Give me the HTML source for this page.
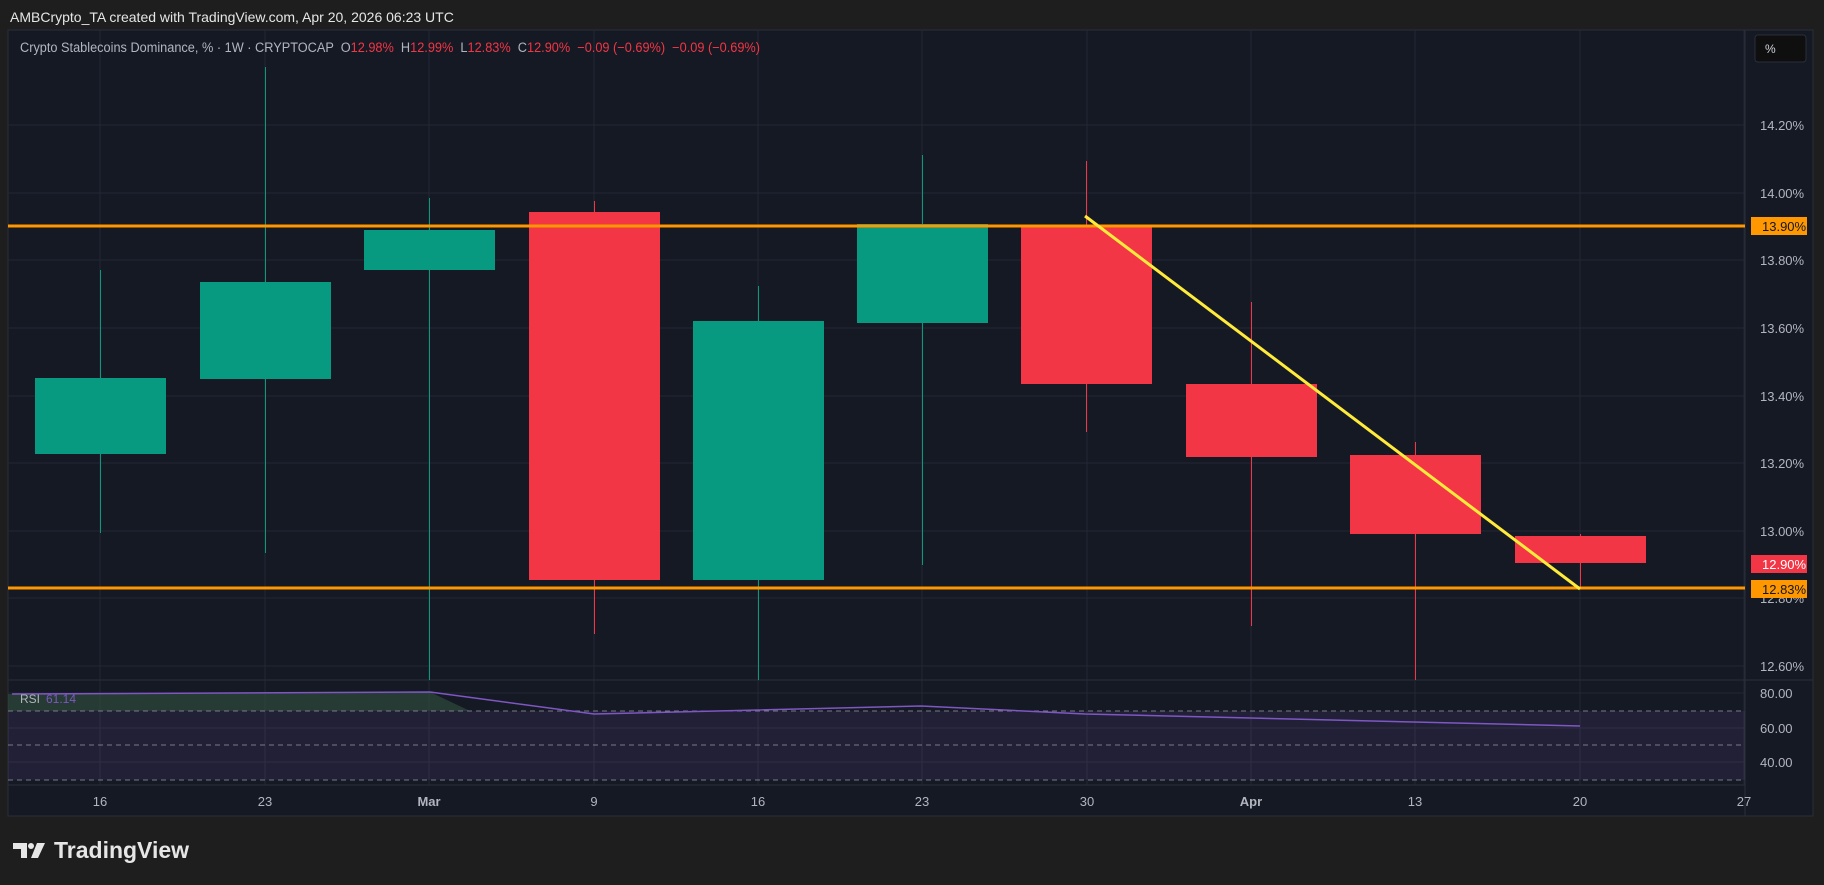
<!DOCTYPE html>
<html><head><meta charset="utf-8"><style>
html,body{margin:0;padding:0;background:#1e1e1e;width:1824px;height:885px;overflow:hidden}
svg{display:block}
text{font-family:"Liberation Sans",sans-serif;white-space:pre}
</style></head><body>
<svg width="1824" height="885" viewBox="0 0 1824 885">
<rect width="1824" height="885" fill="#1e1e1e"/>
<text x="10" y="22" fill="#e6e6e6" font-size="14">AMBCrypto_TA created with TradingView.com, Apr 20, 2026 06:23 UTC</text>
<rect x="8" y="30" width="1805" height="786" fill="#151924" stroke="#2a2e39"/>
<g stroke="#242833" stroke-width="1">
<line x1="8" y1="125" x2="1745" y2="125"/><line x1="8" y1="193" x2="1745" y2="193"/><line x1="8" y1="260" x2="1745" y2="260"/><line x1="8" y1="328" x2="1745" y2="328"/><line x1="8" y1="396" x2="1745" y2="396"/><line x1="8" y1="463" x2="1745" y2="463"/><line x1="8" y1="531" x2="1745" y2="531"/><line x1="8" y1="598" x2="1745" y2="598"/><line x1="8" y1="666" x2="1745" y2="666"/>
<line x1="8" y1="693" x2="1745" y2="693"/><line x1="8" y1="728" x2="1745" y2="728"/><line x1="8" y1="762" x2="1745" y2="762"/>
<line x1="100" y1="30" x2="100" y2="785"/><line x1="265" y1="30" x2="265" y2="785"/><line x1="429" y1="30" x2="429" y2="785"/><line x1="594" y1="30" x2="594" y2="785"/><line x1="758" y1="30" x2="758" y2="785"/><line x1="922" y1="30" x2="922" y2="785"/><line x1="1087" y1="30" x2="1087" y2="785"/><line x1="1251" y1="30" x2="1251" y2="785"/><line x1="1415" y1="30" x2="1415" y2="785"/><line x1="1580" y1="30" x2="1580" y2="785"/><line x1="1744" y1="30" x2="1744" y2="785"/>
</g>
<line x1="8" y1="680" x2="1813" y2="680" stroke="#2a2e39"/>
<line x1="1745" y1="30" x2="1745" y2="816" stroke="#2a2e39"/>
<line x1="8" y1="785" x2="1745" y2="785" stroke="#2a2e39"/>
<rect x="8" y="711" width="1737" height="69" fill="#7e57c2" fill-opacity="0.12"/>
<path d="M8 694 L430 692 L470 711 L8 711Z" fill="#2e4a3a" fill-opacity="0.7"/>
<g stroke="#787b86" stroke-dasharray="5,4" stroke-width="1"><line x1="8" y1="711" x2="1745" y2="711"/><line x1="8" y1="745" x2="1745" y2="745"/><line x1="8" y1="780" x2="1745" y2="780"/></g>
<polyline points="12,694 430,692 594,714 921,706 1085,714 1580,726" fill="none" stroke="#7e57c2" stroke-width="1.5"/>
<text x="20" y="703" fill="#b2b5be" font-size="12">RSI</text><text x="46" y="703" fill="#7e57c2" font-size="12">61.14</text>
<g stroke-width="1">
<line x1="100.5" y1="270" x2="100.5" y2="533" stroke="#089981"/><rect x="35" y="378" width="131" height="76" fill="#089981"/>
<line x1="265.5" y1="67" x2="265.5" y2="553" stroke="#089981"/><rect x="200" y="282" width="131" height="97" fill="#089981"/>
<line x1="429.5" y1="198" x2="429.5" y2="680" stroke="#089981"/><rect x="364" y="230" width="131" height="40" fill="#089981"/>
<line x1="594.5" y1="201" x2="594.5" y2="634" stroke="#f23645"/><rect x="529" y="212" width="131" height="368" fill="#f23645"/>
<line x1="758.5" y1="286" x2="758.5" y2="680" stroke="#089981"/><rect x="693" y="321" width="131" height="259" fill="#089981"/>
<line x1="922.5" y1="155" x2="922.5" y2="565" stroke="#089981"/><rect x="857" y="224" width="131" height="99" fill="#089981"/>
<line x1="1086.5" y1="161" x2="1086.5" y2="432" stroke="#f23645"/><rect x="1021" y="226" width="131" height="158" fill="#f23645"/>
<line x1="1251.5" y1="302" x2="1251.5" y2="626" stroke="#f23645"/><rect x="1186" y="384" width="131" height="73" fill="#f23645"/>
<line x1="1415.5" y1="442" x2="1415.5" y2="680" stroke="#f23645"/><rect x="1350" y="455" width="131" height="79" fill="#f23645"/>
<line x1="1580.5" y1="534" x2="1580.5" y2="589" stroke="#f23645"/><rect x="1515" y="536" width="131" height="27" fill="#f23645"/>
</g>
<line x1="8" y1="226" x2="1745" y2="226" stroke="#ff9800" stroke-width="3"/>
<line x1="8" y1="588" x2="1745" y2="588" stroke="#ff9800" stroke-width="3"/>
<line x1="1085" y1="216" x2="1580" y2="589" stroke="#ffeb3b" stroke-width="3"/>
<g fill="#b2b5be" font-size="13">
<text x="1760" y="130">14.20%</text><text x="1760" y="198">14.00%</text><text x="1760" y="265">13.80%</text><text x="1760" y="333">13.60%</text><text x="1760" y="401">13.40%</text><text x="1760" y="468">13.20%</text><text x="1760" y="536">13.00%</text><text x="1760" y="603">12.80%</text><text x="1760" y="671">12.60%</text>
<text x="1760" y="698">80.00</text><text x="1760" y="733">60.00</text><text x="1760" y="767">40.00</text>
</g>
<rect x="1751" y="217" width="56" height="18" fill="#ff9800"/><text x="1762" y="231" fill="#131722" font-size="13">13.90%</text>
<rect x="1751" y="555" width="56" height="18" fill="#f23645"/><text x="1762" y="569" fill="#fff" font-size="13">12.90%</text>
<rect x="1751" y="580" width="56" height="18" fill="#ff9800"/><text x="1762" y="594" fill="#131722" font-size="13">12.83%</text>
<rect x="1755" y="35" width="51" height="27" rx="3" fill="#0f0f0f" stroke="#2a2e39"/><text x="1765" y="53" fill="#d1d4dc" font-size="12">%</text>
<g fill="#b2b5be" font-size="13" text-anchor="middle">
<text x="100" y="806">16</text><text x="265" y="806">23</text><text x="429" y="806" font-weight="bold">Mar</text><text x="594" y="806">9</text><text x="758" y="806">16</text><text x="922" y="806">23</text><text x="1087" y="806">30</text><text x="1251" y="806" font-weight="bold">Apr</text><text x="1415" y="806">13</text><text x="1580" y="806">20</text><text x="1744" y="806">27</text>
</g>
<text x="20" y="52" font-size="13.5" fill="#b2b5be" textLength="740" lengthAdjust="spacingAndGlyphs">Crypto Stablecoins Dominance, % · 1W · CRYPTOCAP  O<tspan fill="#f23645">12.98%</tspan>  H<tspan fill="#f23645">12.99%</tspan>  L<tspan fill="#f23645">12.83%</tspan>  C<tspan fill="#f23645">12.90%  −0.09 (−0.69%)  −0.09 (−0.69%)</tspan></text>
<path d="M13 843h14v15h-6v-9h-8z" fill="#e6e6e6"/><circle cx="31" cy="846" r="3" fill="#e6e6e6"/><path d="M37 843h8l-7 15h-7z" fill="#e6e6e6"/>
<text x="54" y="858" fill="#e6e6e6" font-size="23" font-weight="bold">TradingView</text>
</svg>
</body></html>
